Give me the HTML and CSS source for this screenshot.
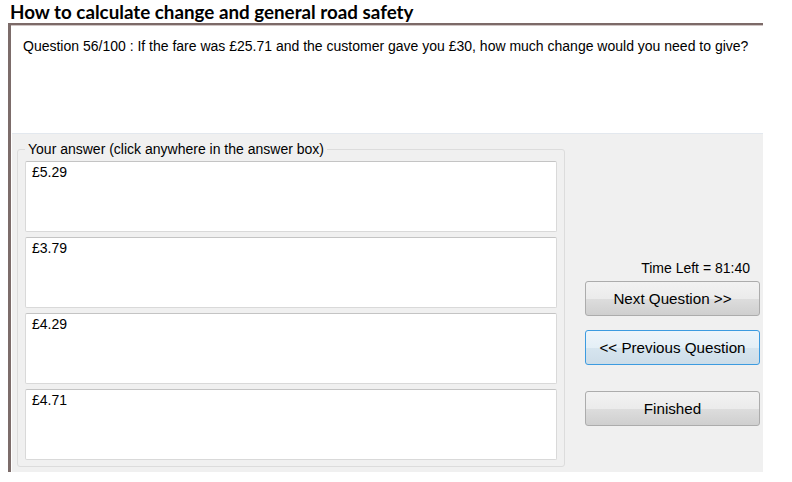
FILE: index.html
```html
<!DOCTYPE html>
<html>
<head>
<meta charset="utf-8">
<link rel="stylesheet" href="styles.css">
</head>
<body>
<h1 class="title">How to calculate change and general road safety</h1>
<div class="frame">
  <div class="question">Question 56/100 : If the fare was £25.71 and the customer gave you £30, how much change would you need to give?</div>
  <div class="panel">
    <fieldset class="answers">
      <legend>Your answer (click anywhere in the answer box)</legend>
      <div class="answer">£5.29</div>
      <div class="answer">£3.79</div>
      <div class="answer">£4.29</div>
      <div class="answer">£4.71</div>
    </fieldset>
    <div class="side">
      <div class="time">Time Left = 81:40</div>
      <button class="btn">Next Question &gt;&gt;</button>
      <button class="btn btn-hover">&lt;&lt; Previous Question</button>
      <button class="btn btn-finish">Finished</button>
    </div>
  </div>
</div>
</body>
</html>
```
FILE: styles.css
```css
html, body {
  margin: 0;
  padding: 0;
  background: #ffffff;
}
body {
  width: 792px;
  height: 482px;
  overflow: hidden;
  font-family: "Liberation Sans", Arial, sans-serif;
}
.title {
  margin: 0;
  padding: 1px 0 0 10px;
  height: 23px;
  box-sizing: border-box;
  font-family: Lato, "Open Sans", sans-serif;
  font-weight: 700;
  font-size: 18.8px;
  line-height: 21px;
  color: #000;
}
.frame {
  margin-left: 8px;
  width: 752px;
  border-left: 3px solid #7c6c6a;
  border-top: 2px solid #7c6a68;
  box-shadow: inset 0 1px 0 #cfc5c4;
  padding-top: 2px;
}
.question {
  margin-left: 1px;
  height: 107px;
  background: #fff;
  border-bottom: 1px solid #e3e8ee;
  font-size: 14px;
  padding: 11px 0 0 11px;
  box-sizing: border-box;
  color: #000;
}
.panel {
  margin-left: 1px;
  background: #f0f0f0;
  height: 338px;
  display: flex;
  align-items: flex-start;
  box-sizing: border-box;
}
.answers {
  margin: 7px 0 0 5px;
  padding: 4px 7px 6px 7px;
  width: 548px;
  box-sizing: border-box;
  border: 1px solid #dcdcdc;
  border-radius: 3px;
  display: flex;
  flex-direction: column;
  gap: 5px;
}
.answers legend {
  font-size: 14px;
  padding: 0 3px;
  margin-left: 0;
  color: #000;
}
.answer {
  height: 71px;
  box-sizing: border-box;
  background: #fff;
  border: 1px solid #d9d9d9;
  border-top-color: #c4c4c4;
  border-radius: 2px;
  font-size: 14px;
  line-height: 16px;
  padding: 2px 0 0 6px;
  color: #000;
}
.side {
  margin: 126px 0 0 20px;
  width: 175px;
  display: flex;
  flex-direction: column;
}
.time {
  text-align: right;
  font-size: 14px;
  padding-right: 10px;
  height: 21px;
  line-height: 16px;
}
.btn {
  height: 35px;
  margin: 0 0 14px 0;
  font-family: "Liberation Sans", Arial, sans-serif;
  font-size: 15.2px;
  color: #000;
  border: 1px solid #acacac;
  border-radius: 3px;
  background: linear-gradient(#f2f2f2 0%, #ebebeb 50%, #dddddd 51%, #cfcfcf 100%);
  padding: 0;
}
.btn-hover {
  border-color: #3c9be0;
  background: linear-gradient(#eef5fa 0%, #e4eff6 50%, #d6e5ef 51%, #cddde8 100%);
}
.btn-finish {
  margin-top: 12px;
}
```
